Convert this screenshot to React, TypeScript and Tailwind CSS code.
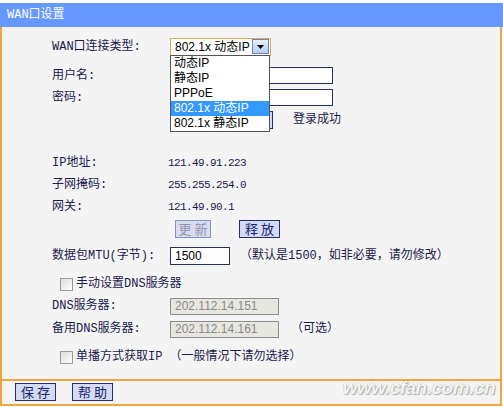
const cjk = { fontFamily: '"Liberation Mono", "Noto Sans CJK SC", monospace' }
const sans = { fontFamily: '"Liberation Sans", "Noto Sans CJK SC", sans-serif' }

function Label({ children }: { children: React.ReactNode }) {
  return (
    <span className="w-[116px] shrink-0 text-[12px] leading-none text-[#1a1a4e]" style={cjk}>
      {children}
    </span>
  )
}

function Value({ children }: { children: React.ReactNode }) {
  return (
    <span className="text-[11px] tracking-[-0.6px] leading-none text-[#1a1a4e]" style={{ fontFamily: '"Liberation Mono", monospace' }}>
      {children}
    </span>
  )
}

function Btn({ children, disabled, className = '' }: { children?: React.ReactNode; disabled?: boolean; className?: string }) {
  return (
    <div
      className={`h-[18px] flex items-center justify-center whitespace-nowrap text-[13px] leading-none tracking-[3px] pl-[3px] border ${
        disabled ? 'border-[#8791bd] bg-[#d9ddf1] text-[#8e94ad]' : 'border-[#24306a] bg-[#d3daf5] text-[#1b2466]'
      } ${className}`}
      style={sans}
    >
      {children}
    </div>
  )
}

function TextBox({ value, disabled, className = '' }: { value: string; disabled?: boolean; className?: string }) {
  return (
    <div
      className={`h-[17px] flex items-center px-[4px] text-[12px] leading-none border ${
        disabled ? 'border-[#8c8c8c] bg-[#e8e6e0] text-[#8a8a8a]' : 'border-[#233170] bg-white text-black'
      } ${className}`}
      style={sans}
    >
      {value}
    </div>
  )
}

function Check() {
  return (
    <span className="w-[13px] h-[13px] shrink-0 border border-[#9a9a9a] bg-[linear-gradient(135deg,#dcdcdc,#ffffff)] mr-[3px]" />
  )
}

const options = ['动态IP', '静态IP', 'PPPoE', '802.1x 动态IP', '802.1x 静态IP']

export default function App() {
  return (
    <div className="w-[503px] h-[407px] bg-white relative overflow-hidden" style={sans}>
      <div className="h-[3px]" />
      <div className="h-[24px] bg-[#6699ff] flex items-center pl-[7px] text-white text-[12px] leading-none" style={cjk}>
        WAN口设置
      </div>

      <div className="w-[502px] border-x-2 border-[#f2a53c] bg-[#f4f4f4]">
        <div className="pl-[50px] pt-[9px] pb-[11px] flex flex-col">
          {/* connection type */}
          <div className="h-[21px] flex items-center">
            <Label>WAN口连接类型:</Label>
            <div className="relative ml-[2px]">
              <div className="w-[101px] h-[18px] border border-[#d9a95c] bg-white flex items-center justify-between pl-[4px] pr-[1px]">
                <span className="text-[12px] leading-none text-black">802.1x 动态IP</span>
                <span className="w-[17px] h-[15px] border border-[#6f86b4] bg-[linear-gradient(#e3efff,#b4cdf0)] flex items-center justify-center">
                  <svg width="7" height="4" viewBox="0 0 7 4">
                    <path d="M0 0h7L3.5 4z" fill="#000" />
                  </svg>
                </span>
              </div>
              <div className="absolute left-[0px] top-[17px] w-[100px] border border-[#555] bg-white z-10 flex flex-col">
                {options.map((o, i) => (
                  <div
                    key={o}
                    className={`h-[15px] flex items-center pl-[3px] text-[12px] leading-none ${
                      i === 3 ? 'bg-[#3399ff] text-white' : 'text-black'
                    }`}
                  >
                    {o}
                  </div>
                ))}
              </div>
            </div>
          </div>

          <div className="h-[23px] mt-[7px] flex items-center">
            <Label>用户名:</Label>
            <TextBox value="" className="ml-[2px] w-[163px]" />
          </div>
          <div className="h-[21px] flex items-center">
            <Label>密码:</Label>
            <TextBox value="" className="ml-[2px] w-[163px]" />
          </div>
          <div className="h-[24px] flex items-center">
            <Label>&nbsp;</Label>
            {/* button hidden under the open list */}
            <Btn className="ml-[62px] w-[43px]" />
            <span className="ml-[20px] text-[12px] leading-none text-[#1a1a4e]" style={cjk}>登录成功</span>
          </div>

          <div className="h-[22px] mt-[20px] flex items-center">
            <Label>IP地址:</Label>
            <Value>121.49.91.223</Value>
          </div>
          <div className="h-[22px] flex items-center">
            <Label>子网掩码:</Label>
            <Value>255.255.254.0</Value>
          </div>
          <div className="h-[22px] flex items-center">
            <Label>网关:</Label>
            <Value>121.49.90.1</Value>
          </div>
          <div className="h-[22px] flex items-center">
            <Label>&nbsp;</Label>
            <Btn disabled className="ml-[7px] w-[36px]">更新</Btn>
            <Btn className="ml-[28px] w-[41px]">释放</Btn>
          </div>

          <div className="h-[22px] mt-[5px] flex items-center">
            <Label>数据包MTU(字节):</Label>
            <TextBox value="1500" className="ml-[2px] w-[60px] h-[18px]" />
            <span className="ml-[10px] text-[12px] leading-none text-[#1a1a4e]" style={cjk}>
              （默认是1500，如非必要，请勿修改）
            </span>
          </div>

          <div className="h-[22px] mt-[6px] flex items-center pl-[8px]">
            <Check />
            <span className="text-[12px] leading-none text-[#1a1a4e]" style={cjk}>手动设置DNS服务器</span>
          </div>
          <div className="h-[22px] flex items-center">
            <Label>DNS服务器:</Label>
            <TextBox disabled value="202.112.14.151" className="ml-[2px] w-[109px]" />
          </div>
          <div className="h-[22px] mt-[1px] flex items-center">
            <Label>备用DNS服务器:</Label>
            <TextBox disabled value="202.112.14.161" className="ml-[2px] w-[109px]" />
            <span className="ml-[12px] text-[12px] leading-none text-[#1a1a4e]" style={cjk}>（可选）</span>
          </div>

          <div className="h-[22px] mt-[6px] flex items-center pl-[8px]">
            <Check />
            <span className="text-[12px] leading-none text-[#1a1a4e]" style={cjk}>
              单播方式获取IP （一般情况下请勿选择）
            </span>
          </div>
        </div>

        <div className="border-t-2 border-b-2 border-[#f2a53c] h-[27px] pt-[2px] pl-[13px] flex items-start gap-[16px]">
          <Btn className="w-[41px]">保存</Btn>
          <Btn className="w-[41px]">帮助</Btn>
        </div>
      </div>

      <div
        className="absolute right-[8px] bottom-[10px] text-[19px] font-bold italic leading-none text-[#f4f4f4] tracking-[-0.5px] [text-shadow:0_0_1px_#9a9a9a,1px_1px_1px_#b0b0b0]"
        style={{ fontFamily: '"Liberation Sans", sans-serif' }}
      >
        www.cfan.com.cn
      </div>
    </div>
  )
}
